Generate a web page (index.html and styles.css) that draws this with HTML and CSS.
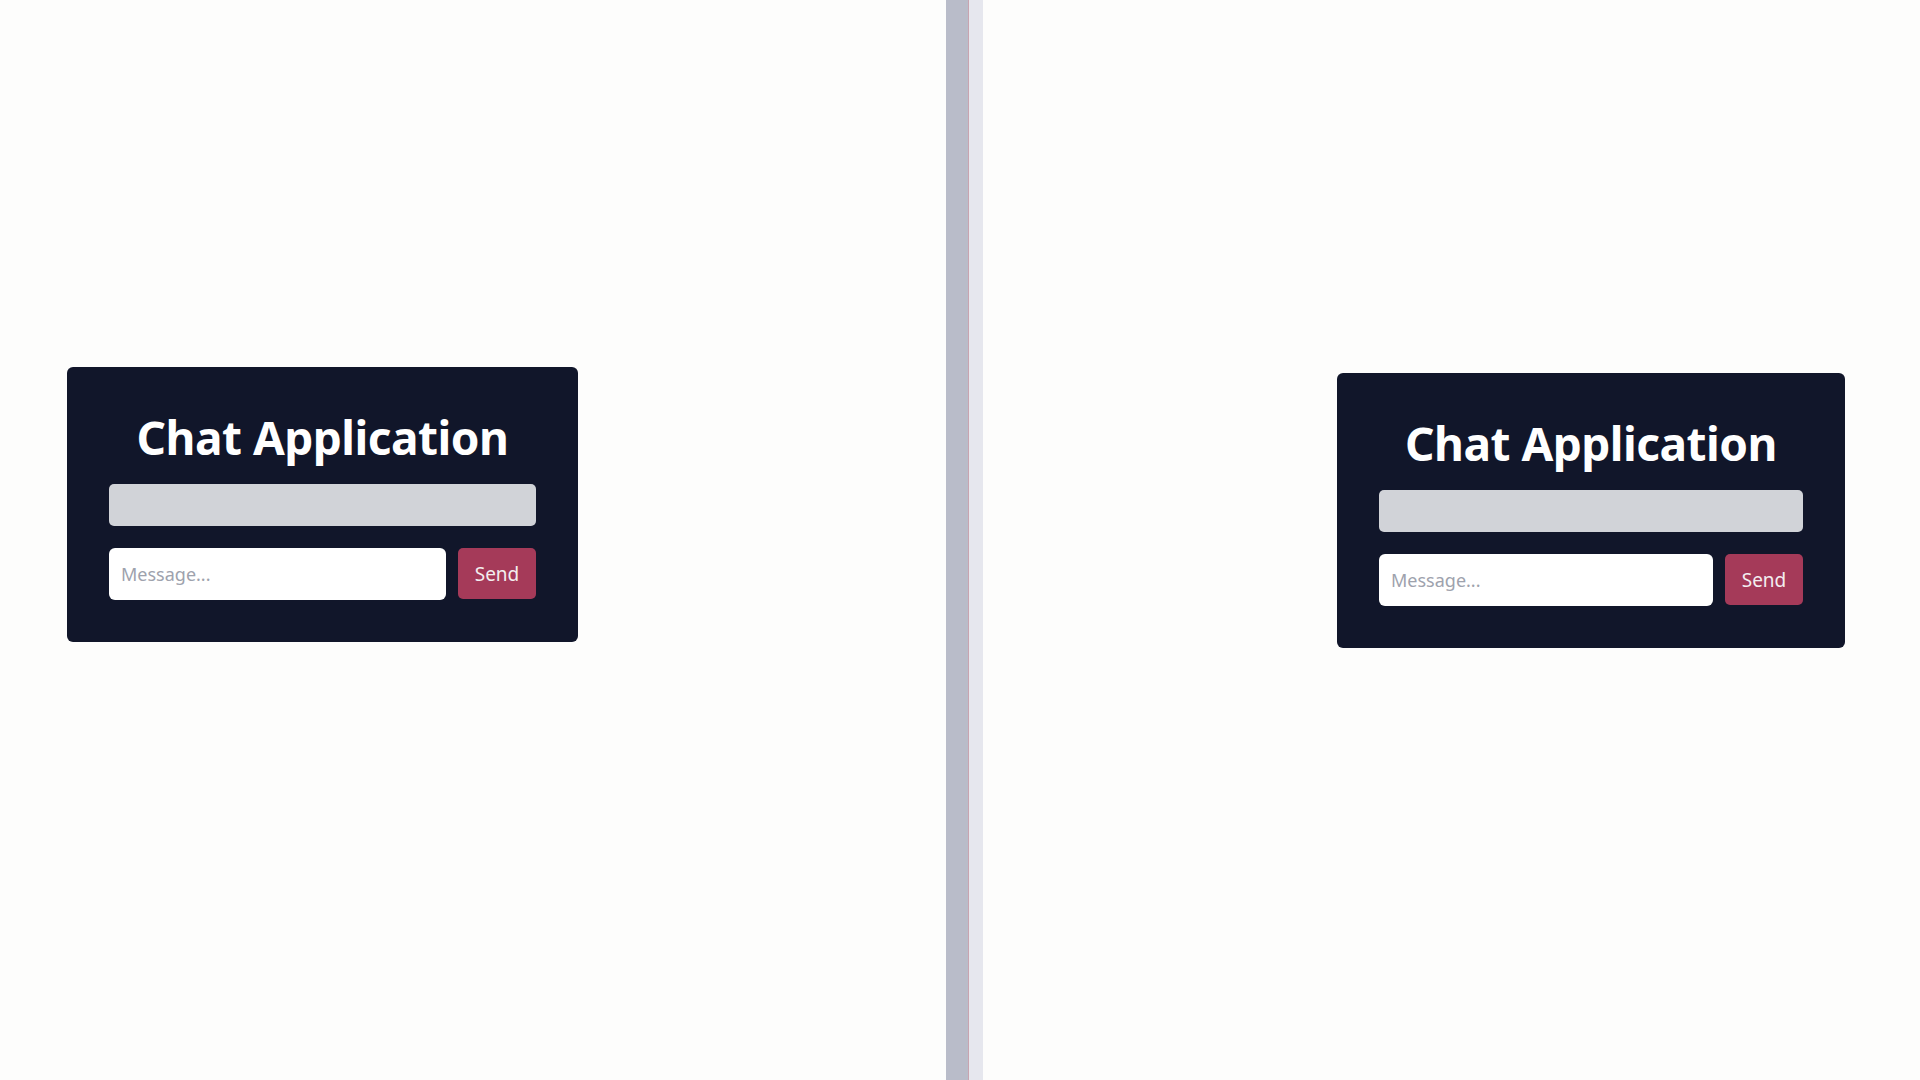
FILE: index.html
```html
<!DOCTYPE html>
<html>
<head>
<meta charset="utf-8">
<link rel="stylesheet" href="styles.css">
</head>
<body>
  <div class="pane pane-left">
    <div class="card card-left">
      <h1 class="title">Chat Application</h1>
      <div class="messages"></div>
      <div class="composer">
        <input class="msg-input" type="text" placeholder="Message...">
        <button class="send-btn">Send</button>
      </div>
    </div>
  </div>
  <div class="divider">
    <div class="divider-dark"></div>
    <div class="divider-line"></div>
    <div class="divider-light"></div>
  </div>
  <div class="pane pane-right">
    <div class="card card-right">
      <h1 class="title">Chat Application</h1>
      <div class="messages"></div>
      <div class="composer">
        <input class="msg-input" type="text" placeholder="Message...">
        <button class="send-btn">Send</button>
      </div>
    </div>
  </div>
</body>
</html>
```
FILE: styles.css
```css
html, body {
  margin: 0;
  padding: 0;
  height: 100%;
}
body {
  display: flex;
  background: #fdfdfc;
  font-family: "Noto Sans", "Open Sans", sans-serif;
  overflow: hidden;
}
.pane {
  display: flex;
  align-items: flex-start;
  box-sizing: border-box;
}
.pane-left {
  width: 946px;
  padding-left: 67px;
  padding-top: 367px;
}
.pane-right {
  flex: 1;
  justify-content: flex-end;
  padding-right: 75px;
  padding-top: 373px;
}
.divider {
  width: 37px;
  display: flex;
}
.divider-dark {
  width: 22px;
  background: #b9bcc9;
}
.divider-line {
  width: 1px;
  background: #c9a4b0;
}
.divider-light {
  width: 14px;
  background: #e6e7ee;
}
.card {
  background: #11162a;
  border-radius: 6px;
  box-sizing: border-box;
  padding: 42px;
  display: flex;
  flex-direction: column;
}
.card-left { width: 511px; }
.card-right { width: 508px; }
.title {
  margin: 0 0 19px;
  color: #ffffff;
  font-size: 46px;
  line-height: 56px;
  font-weight: 700;
  text-align: center;
  letter-spacing: -0.5px;
}
.messages {
  height: 42px;
  background: #d1d3d8;
  border-radius: 5px;
  margin-bottom: 22px;
}
.composer {
  display: flex;
  align-items: flex-start;
  gap: 12px;
}
.msg-input {
  flex: 1;
  min-width: 0;
  height: 52px;
  box-sizing: border-box;
  border: none;
  border-radius: 6px;
  background: #ffffff;
  padding: 0 12px;
  font-family: inherit;
  font-size: 18px;
  outline: none;
}
.msg-input::placeholder {
  color: #9ea2ad;
}
.send-btn {
  width: 78px;
  height: 51px;
  border: none;
  border-radius: 5px;
  background: #a53a59;
  color: #f3eef0;
  font-family: inherit;
  font-size: 19px;
  padding: 0;
}
```
